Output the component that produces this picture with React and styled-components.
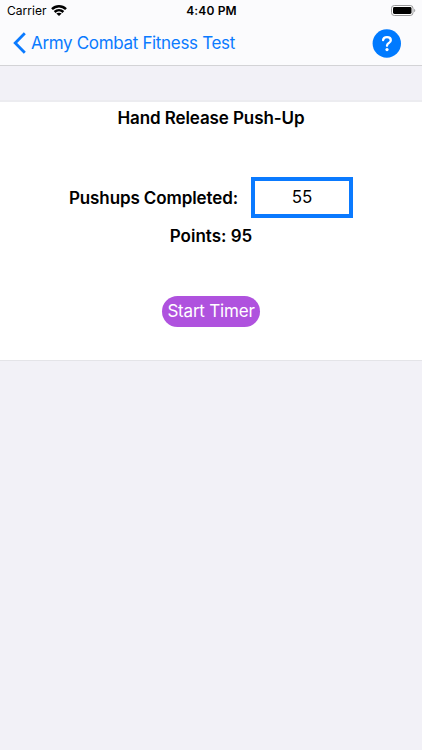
import React from "react";
import styled, { createGlobalStyle } from "styled-components";

const GlobalStyle = createGlobalStyle`
    * {
        box-sizing: border-box;
    }

    body {
        margin: 0;
        background-color: #f2f1f7;
        color: #000;
        font-family: Inter, "Liberation Sans", sans-serif;
    }
`

const StyledScreen = styled.div`
    width: 100%;
    height: 750px;
    overflow: hidden;
    background-color: #f2f1f7;
`

const StyledHeader = styled.header`
    height: 66px;
    background-color: #fbfbfd;
    border-bottom: 1px solid #d3d3d6;
`

const StatusBar = styled.div`
    display: grid;
    grid-template-columns: 1fr auto 1fr;
    align-items: center;
    height: 21px;
    padding: 0 6px 0 7px;
    font-size: 12px;
    line-height: 21px;

    .carrier{
        display: flex;
        align-items: center;
        gap: 4px;
        letter-spacing: 0.05px;
    }

    .time{
        font-weight: 600;
        letter-spacing: 0.15px;
    }

    .battery{
        display: flex;
        justify-content: flex-end;
    }
`

const NavBar = styled.nav`
    display: flex;
    justify-content: space-between;
    align-items: center;
    height: 44px;
    padding: 0 21px 0 13px;
`

const BackButton = styled.button`
    display: flex;
    align-items: center;
    gap: 5px;
    padding: 0;
    border: none;
    background: none;
    color: #0a7aff;
    font-family: inherit;
    font-size: 17px;
    line-height: 22px;
    letter-spacing: ${props => props.$spacing};
    white-space: nowrap;
`

const HelpButton = styled.button`
    display: flex;
    padding: 0;
    border: none;
    background: none;
`

const Card = styled.main`
    display: flex;
    flex-direction: column;
    align-items: center;
    height: 261px;
    margin-top: 34px;
    padding-top: 5px;
    background-color: #fff;
    border-top: 2px solid #ececf0;
    border-bottom: 1px solid #e4e4e8;
`

const Label = styled.div`
    font-size: 17px;
    font-weight: 600;
    line-height: 22px;
    letter-spacing: ${props => props.$spacing || "0"};
    white-space: nowrap;
`

const ScoreRow = styled.div`
    display: flex;
    align-items: center;
    gap: 13px;
    margin: 48px 0 7px;
`

const ScoreInput = styled.input`
    width: 102px;
    height: 41px;
    padding: 0 0 2px;
    border: 4px solid #0a7aff;
    border-radius: 0;
    outline: none;
    background-color: #fff;
    color: #000;
    font-family: inherit;
    font-size: 17px;
    text-align: center;
`

const TimerButton = styled.button`
    width: 98px;
    height: 31px;
    margin-top: 49px;
    padding: 0;
    border: none;
    border-radius: 16px;
    background-color: #af52de;
    color: #fff;
    font-family: inherit;
    font-size: 17px;
    line-height: 31px;
    letter-spacing: -0.2px;
    white-space: nowrap;
`

const WifiIcon = () => (
    <svg width="16" height="11" viewBox="0 0 16 11" fill="none" stroke="#000" strokeWidth="2.5">
        <path d="M1 4.2C5 0.4 11 0.4 15 4.2" />
        <path d="M3.6 7C6.1 4.7 9.9 4.7 12.4 7" />
        <path d="M8 11L5.3 8.6C6.8 7.3 9.2 7.3 10.7 8.6Z" fill="#000" stroke="none" />
    </svg>
)

const BatteryIcon = () => (
    <svg width="25" height="11" viewBox="0 0 25 11">
        <rect x="0.5" y="0.5" width="21.5" height="10" rx="2.8" fill="#fff" stroke="#98989a" />
        <rect x="2" y="2" width="18.5" height="7" rx="1.4" fill="#000" />
        <path d="M23.2 3.8C24.6 4.3 24.6 6.7 23.2 7.2Z" fill="#98989a" />
    </svg>
)

const BackIcon = () => (
    <svg width="13" height="22" viewBox="0 0 13 22" fill="none" stroke="#0a7aff" strokeWidth="2.8">
        <path d="M11.8 1.2L2.2 11L11.8 20.8" />
    </svg>
)

const HelpIcon = () => (
    <svg width="29" height="29" viewBox="0 0 29 29" fill="none">
        <circle cx="14.8" cy="14.5" r="14.2" fill="#007aff" />
        <path d="M11.1 11.2C11.3 9.2 12.8 8.2 15 8.2C17.3 8.2 18.8 9.4 18.8 11.2C18.8 12.6 18 13.3 16.8 14.1C15.5 14.9 15 15.5 15 16.8" stroke="#fff" strokeWidth="2.3" strokeLinecap="round" />
        <circle cx="15" cy="20.6" r="1.6" fill="#fff" />
    </svg>
)

const Header = () => {

    return (
        <StyledHeader>
            <StatusBar>
                <div className="carrier">
                    <span>Carrier</span>
                    <WifiIcon />
                </div>
                <div className="time">4:40 PM</div>
                <div className="battery">
                    <BatteryIcon />
                </div>
            </StatusBar>
            <NavBar>
                <BackButton $spacing="-0.33px">
                    <BackIcon />
                    <span>Army Combat Fitness Test</span>
                </BackButton>
                <HelpButton aria-label="Help">
                    <HelpIcon />
                </HelpButton>
            </NavBar>
        </StyledHeader>
    )
}

const App = () => {

    return (
        <StyledScreen>
            <GlobalStyle />
            <Header />
            <Card>
                <Label $spacing="-0.1px">Hand Release Push-Up</Label>
                <ScoreRow>
                    <Label as="label" htmlFor="pushups" $spacing="-0.1px">Pushups Completed:</Label>
                    <ScoreInput id="pushups" defaultValue="55" />
                </ScoreRow>
                <Label>Points: 95</Label>
                <TimerButton>Start Timer</TimerButton>
            </Card>
        </StyledScreen>
    )
}

export default App;
